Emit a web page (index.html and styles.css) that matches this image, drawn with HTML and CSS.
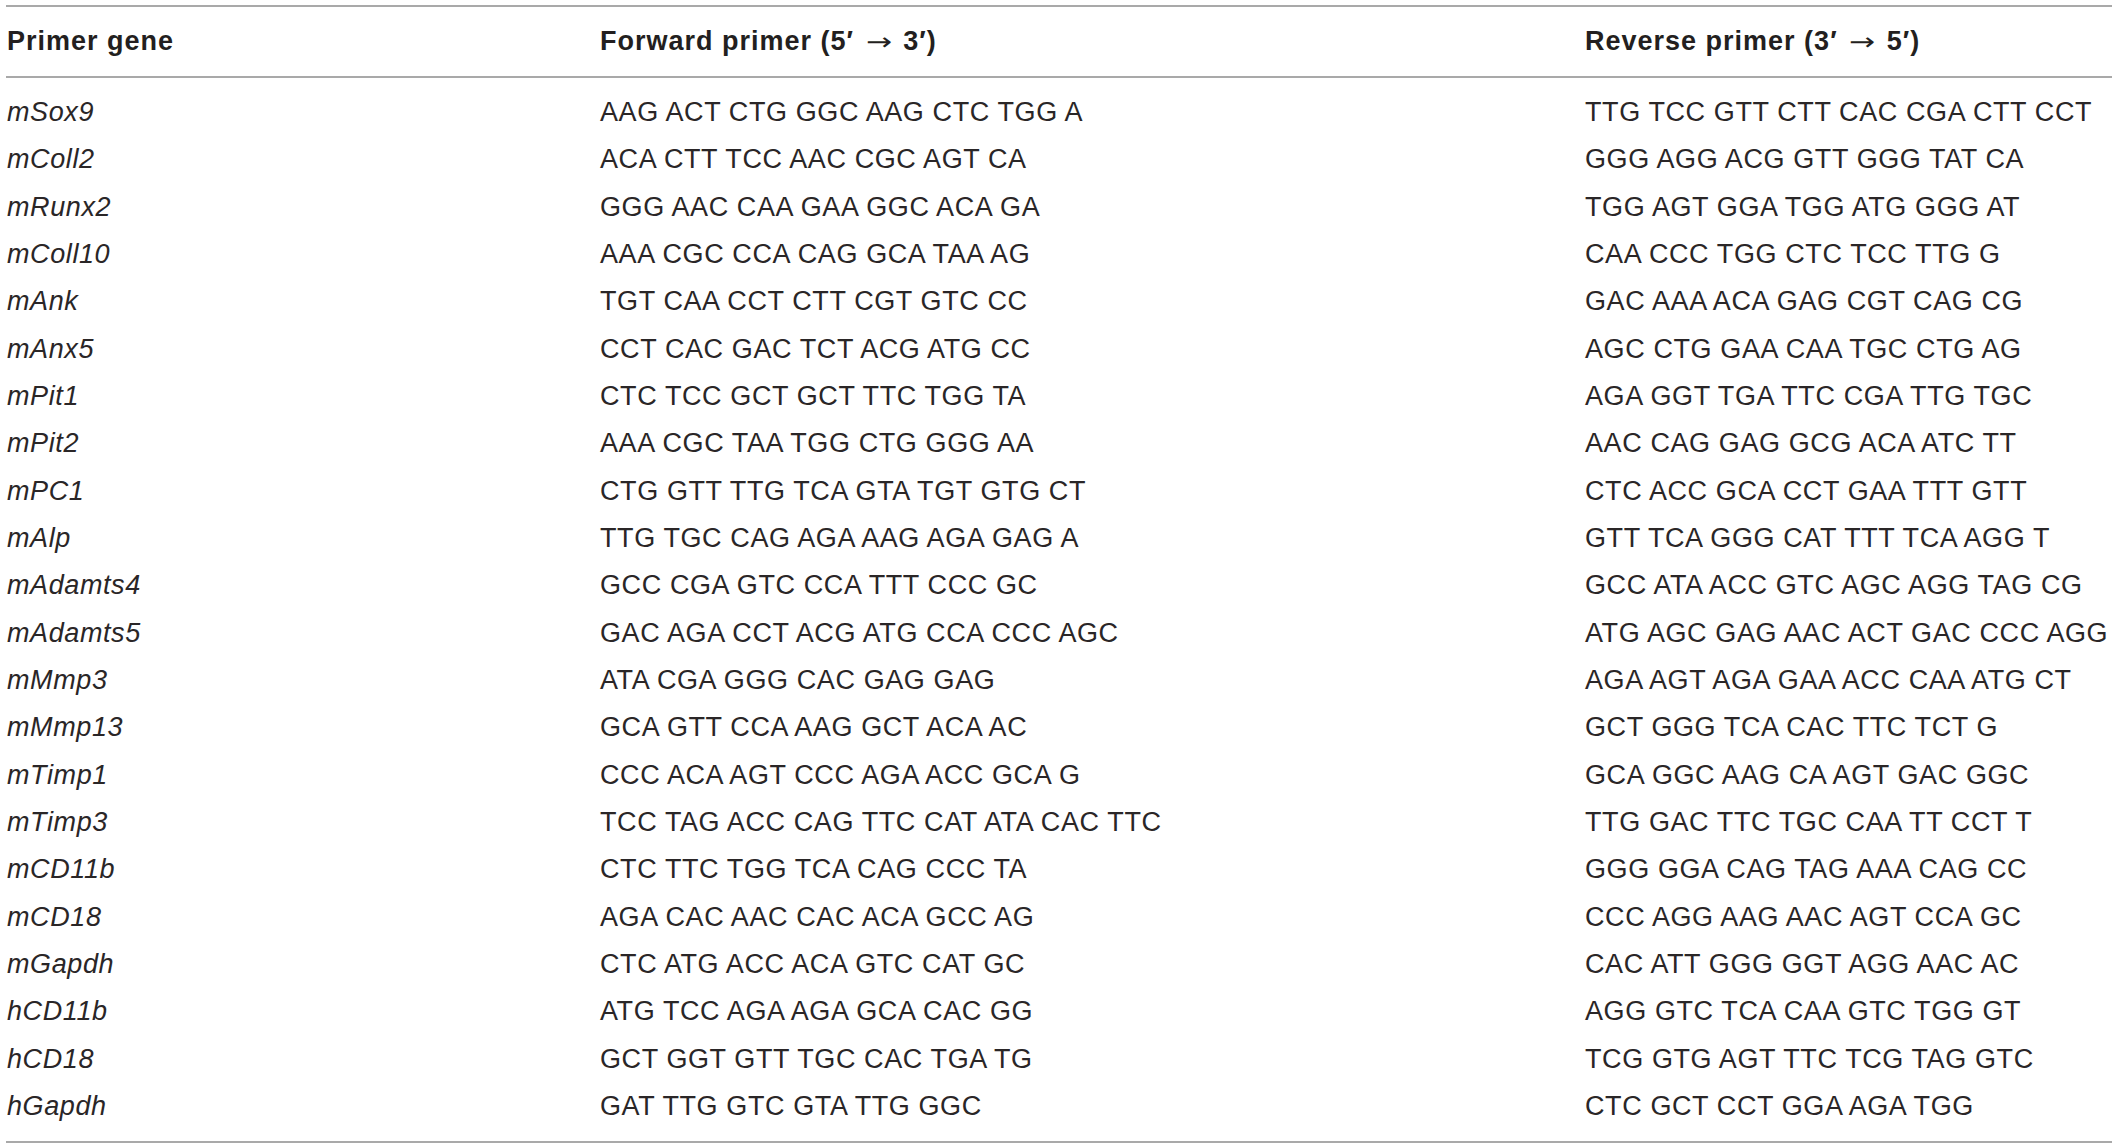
FILE: index.html
```html
<!DOCTYPE html>
<html lang="en">
<head>
<meta charset="utf-8">
<title>Primer sequences</title>
<link rel="stylesheet" href="styles.css">
</head>
<body>
<div class="table">
  <div class="row head">
    <div class="cell">Primer gene</div>
    <div class="cell">Forward primer (5′ <span class="arrow">→</span> 3′)</div>
    <div class="cell">Reverse primer (3′ <span class="arrow">→</span> 5′)</div>
  </div>
  <div class="body">
    <div class="row"><div class="cell gene">mSox9</div><div class="cell">AAG ACT CTG GGC AAG CTC TGG A</div><div class="cell">TTG TCC GTT CTT CAC CGA CTT CCT</div></div>
    <div class="row"><div class="cell gene">mColl2</div><div class="cell">ACA CTT TCC AAC CGC AGT CA</div><div class="cell">GGG AGG ACG GTT GGG TAT CA</div></div>
    <div class="row"><div class="cell gene">mRunx2</div><div class="cell">GGG AAC CAA GAA GGC ACA GA</div><div class="cell">TGG AGT GGA TGG ATG GGG AT</div></div>
    <div class="row"><div class="cell gene">mColl10</div><div class="cell">AAA CGC CCA CAG GCA TAA AG</div><div class="cell">CAA CCC TGG CTC TCC TTG G</div></div>
    <div class="row"><div class="cell gene">mAnk</div><div class="cell">TGT CAA CCT CTT CGT GTC CC</div><div class="cell">GAC AAA ACA GAG CGT CAG CG</div></div>
    <div class="row"><div class="cell gene">mAnx5</div><div class="cell">CCT CAC GAC TCT ACG ATG CC</div><div class="cell">AGC CTG GAA CAA TGC CTG AG</div></div>
    <div class="row"><div class="cell gene">mPit1</div><div class="cell">CTC TCC GCT GCT TTC TGG TA</div><div class="cell">AGA GGT TGA TTC CGA TTG TGC</div></div>
    <div class="row"><div class="cell gene">mPit2</div><div class="cell">AAA CGC TAA TGG CTG GGG AA</div><div class="cell">AAC CAG GAG GCG ACA ATC TT</div></div>
    <div class="row"><div class="cell gene">mPC1</div><div class="cell">CTG GTT TTG TCA GTA TGT GTG CT</div><div class="cell">CTC ACC GCA CCT GAA TTT GTT</div></div>
    <div class="row"><div class="cell gene">mAlp</div><div class="cell">TTG TGC CAG AGA AAG AGA GAG A</div><div class="cell">GTT TCA GGG CAT TTT TCA AGG T</div></div>
    <div class="row"><div class="cell gene">mAdamts4</div><div class="cell">GCC CGA GTC CCA TTT CCC GC</div><div class="cell">GCC ATA ACC GTC AGC AGG TAG CG</div></div>
    <div class="row"><div class="cell gene">mAdamts5</div><div class="cell">GAC AGA CCT ACG ATG CCA CCC AGC</div><div class="cell">ATG AGC GAG AAC ACT GAC CCC AGG</div></div>
    <div class="row"><div class="cell gene">mMmp3</div><div class="cell">ATA CGA GGG CAC GAG GAG</div><div class="cell">AGA AGT AGA GAA ACC CAA ATG CT</div></div>
    <div class="row"><div class="cell gene">mMmp13</div><div class="cell">GCA GTT CCA AAG GCT ACA AC</div><div class="cell">GCT GGG TCA CAC TTC TCT G</div></div>
    <div class="row"><div class="cell gene">mTimp1</div><div class="cell">CCC ACA AGT CCC AGA ACC GCA G</div><div class="cell">GCA GGC AAG CA AGT GAC GGC</div></div>
    <div class="row"><div class="cell gene">mTimp3</div><div class="cell">TCC TAG ACC CAG TTC CAT ATA CAC TTC</div><div class="cell">TTG GAC TTC TGC CAA TT CCT T</div></div>
    <div class="row"><div class="cell gene">mCD11b</div><div class="cell">CTC TTC TGG TCA CAG CCC TA</div><div class="cell">GGG GGA CAG TAG AAA CAG CC</div></div>
    <div class="row"><div class="cell gene">mCD18</div><div class="cell">AGA CAC AAC CAC ACA GCC AG</div><div class="cell">CCC AGG AAG AAC AGT CCA GC</div></div>
    <div class="row"><div class="cell gene">mGapdh</div><div class="cell">CTC ATG ACC ACA GTC CAT GC</div><div class="cell">CAC ATT GGG GGT AGG AAC AC</div></div>
    <div class="row"><div class="cell gene">hCD11b</div><div class="cell">ATG TCC AGA AGA GCA CAC GG</div><div class="cell">AGG GTC TCA CAA GTC TGG GT</div></div>
    <div class="row"><div class="cell gene">hCD18</div><div class="cell">GCT GGT GTT TGC CAC TGA TG</div><div class="cell">TCG GTG AGT TTC TCG TAG GTC</div></div>
    <div class="row"><div class="cell gene">hGapdh</div><div class="cell">GAT TTG GTC GTA TTG GGC</div><div class="cell">CTC GCT CCT GGA AGA TGG</div></div>
  </div>
</div>
</body>
</html>
```

FILE: styles.css
```css
html, body {
  margin: 0;
  padding: 0;
  background: #ffffff;
}

body {
  font-family: "Liberation Sans", Arial, Helvetica, sans-serif;
  color: #231f20;
}

.table {
  margin: 5px 0 0 6px;
  width: 2106px;
  border-top: 2px solid #a9a9a9;
  border-bottom: 2px solid #a9a9a9;
}

.row {
  display: grid;
  grid-template-columns: 593px 985px 1fr;
  padding-left: 1px;
}

.head {
  height: 69px;
  align-items: center;
  border-bottom: 2px solid #a9a9a9;
  font-weight: bold;
  font-size: 27px;
  letter-spacing: 1px;
}

.arrow {
  display: inline-block;
  font-family: "DejaVu Sans", sans-serif;
  font-weight: normal;
  font-size: 24px;
  letter-spacing: 0;
  transform: scaleX(1.3);
  margin: 0 6px;
}

.body {
  padding: 11px 0 11px 0;
}

.body .row {
  height: 47.33px;
  line-height: 47.33px;
  font-size: 27px;
  letter-spacing: 0.6px;
  color: #2a2627;
}

.cell {
  white-space: nowrap;
}

.gene {
  font-style: italic;
}
```
